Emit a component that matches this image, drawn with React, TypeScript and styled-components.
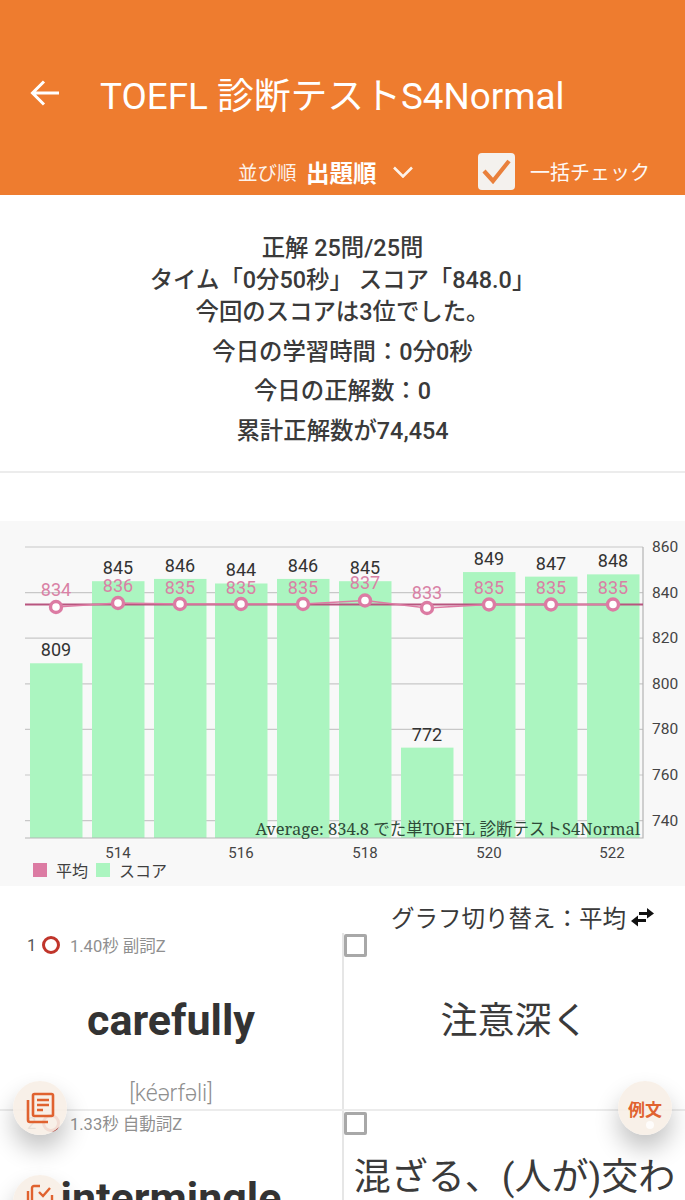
// 3rd party libs
import React from 'react';
import styled, { createGlobalStyle } from 'styled-components';

const JP = `Roboto, "Noto Sans CJK JP", sans-serif`;

const GlobalStyle = createGlobalStyle`
  html, body {
    margin: 0;
    padding: 0;
    background: #fff;
  }
  body {
    font-family: ${JP};
    color: #3a3a3a;
  }
`;

// Chart data
const scores = [809, 845, 846, 844, 846, 845, 772, 849, 847, 848];
const averages = [834, 836, 835, 835, 835, 837, 833, 835, 835, 835];
const averageY = [607, 603, 604, 604, 604, 600.5, 608, 604.5, 604.5, 604.5];
const barLefts = [30, 92, 154, 215, 277, 339, 401, 463, 525, 587];
const gridValues = [860, 840, 820, 800, 780, 760, 740];
const xLabels = [
  { x: 118, label: '514' },
  { x: 241, label: '516' },
  { x: 365, label: '518' },
  { x: 489, label: '520' },
  { x: 612, label: '522' }
];
const toY = (value: number) => 547 + (860 - value) * 2.28;

// Styling
const Page = styled.div`
  position: relative;
  width: 685px;
  height: 1200px;
  overflow: hidden;
  background: #fff;
`;

const Header = styled.header`
  height: 195px;
  background: #ee7c2f;
  color: #fff;
  display: flex;
  flex-direction: column;
  box-sizing: border-box;
  padding-top: 69px;
`;

const TitleRow = styled.div`
  display: flex;
  align-items: center;
  height: 48px;
  padding-left: 30px;
  gap: 40px;
`;

const Title = styled.h1`
  margin: 0;
  font-size: 36.8px;
  font-weight: 400;
  white-space: nowrap;
`;

const SortRow = styled.div`
  display: flex;
  align-items: center;
  margin-top: 36px;
  padding-left: 238px;
  height: 37px;
`;

const SortLabel = styled.span`
  font-size: 19.5px;
  width: 68px;
  opacity: 0.9;
`;

const SortValue = styled.span`
  font-size: 23.5px;
  font-weight: 700;
  width: 87px;
`;

const CheckAll = styled.span`
  width: 37px;
  height: 37px;
  border-radius: 4px;
  background: #f4f1ee;
  margin-left: 65px;
  display: flex;
  align-items: center;
  justify-content: center;
`;

const CheckLabel = styled.span`
  font-size: 20px;
  margin-left: 15px;
  white-space: nowrap;
  opacity: 0.95;
`;

const Summary = styled.section`
  height: 278px;
  box-sizing: border-box;
  border-bottom: 2px solid #ececec;
  padding-top: 37px;
  display: flex;
  flex-direction: column;
  align-items: center;
  font-size: 23.4px;
  font-weight: 500;
  color: #3a3a3a;
`;

const SummaryLine = styled.div<{ $gap?: number }>`
  height: 32px;
  line-height: 32px;
  white-space: pre;
  margin-top: ${({ $gap }) => $gap ?? 0}px;
`;

const ChartPanel = styled.section`
  margin-top: 48px;
  height: 365px;
  background: #f8f8f8;
`;

const ChartSvg = styled.svg`
  display: block;
  width: 685px;
  height: 340px;
  text {
    font-family: ${JP};
  }
`;

const Legend = styled.div`
  display: flex;
  align-items: center;
  height: 18px;
  padding-left: 33px;
  font-size: 16px;
  color: #3f3f3f;
`;

const LegendSwatch = styled.span<{ $color: string }>`
  width: 14px;
  height: 14px;
  background: ${({ $color }) => $color};
  margin-right: 9px;
`;

const LegendText = styled.span`
  margin-right: 8px;
`;

const Toggle = styled.div`
  height: 47px;
  box-sizing: border-box;
  padding: 16px 29px 1px 0;
  display: flex;
  align-items: center;
  justify-content: flex-end;
  font-size: 23.5px;
  color: #3a3a3a;
  white-space: nowrap;
`;

const WordRow = styled.div`
  display: grid;
  grid-template-columns: 344px 341px;
  height: 178px;
  border-bottom: 2px solid #ececec;
  box-sizing: border-box;
`;

const WordCell = styled.div`
  border-right: 2px solid #e6e6e6;
  padding-left: 27px;
  display: flex;
  flex-direction: column;
  align-items: center;
  overflow: hidden;
`;

const Meta = styled.div`
  align-self: flex-start;
  display: flex;
  align-items: center;
  height: 24px;
  font-size: 16.5px;
  color: #8f8f8f;
  white-space: nowrap;
`;

const MetaIndex = styled.span`
  color: #555;
  width: 15px;
`;

const CorrectMark = styled.span`
  width: 18px;
  height: 18px;
  box-sizing: border-box;
  border: 3.5px solid #c0352b;
  border-radius: 50%;
  margin-right: 10px;
`;

const Word = styled.div`
  position: relative;
  z-index: 1;
  font-family: Roboto, sans-serif;
  font-size: 43px;
  font-weight: 700;
  line-height: 54px;
  color: #333;
  margin-top: 36px;
  margin-left: -27px;
`;

const Pronunciation = styled.div`
  font-size: 23px;
  color: #8f8f8f;
  margin-top: 33px;
  margin-left: -27px;
  font-weight: 300;
`;

const MeaningCell = styled.div`
  padding-top: 1px;
  overflow: hidden;
`;

const CheckBox = styled.span`
  display: block;
  width: 23px;
  height: 23px;
  box-sizing: border-box;
  border: 3px solid #a8a8a8;
  border-radius: 2px;
`;

const Meaning = styled.div<{ $top: number }>`
  font-size: 37px;
  line-height: 46px;
  color: #3a3a3a;
  text-align: center;
  padding: 0 8px;
  margin-top: ${({ $top }) => $top}px;
`;

const Fab = styled.div<{ $side: 'left' | 'right'; $top: number }>`
  position: absolute;
  top: ${({ $top }) => $top}px;
  ${({ $side }) => ($side === 'left' ? 'left: 13px;' : 'right: 13px;')}
  width: 54px;
  height: 54px;
  border-radius: 50%;
  background: rgba(247, 238, 230, 0.9);
  box-shadow: 0 14px 24px rgba(0, 0, 0, 0.24);
  display: flex;
  align-items: center;
  justify-content: center;
  color: #e0622f;
  font-size: 17px;
  font-weight: 700;
`;

const FabDot = styled.span`
  position: absolute;
  left: 28px;
  top: 40px;
  width: 8px;
  height: 8px;
  border-radius: 50%;
  background: #fff;
  opacity: 0.8;
`;

const BackIcon = () => (
  <svg width="30" height="30" viewBox="0 0 30 30" fill="none" stroke="#fff" strokeWidth="3">
    <path d="M29 15H3M14 3.5 2.5 15 14 26.5" />
  </svg>
);

const ChevronIcon = () => (
  <svg width="20" height="12" viewBox="0 0 20 12" fill="none" stroke="#fff" strokeWidth="2.6" opacity="0.9">
    <path d="M1 1.5 10 10.5 19 1.5" />
  </svg>
);

const TickIcon = () => (
  <svg width="29" height="25" viewBox="0 0 29 25" fill="none" stroke="#e9803c" strokeWidth="4.2">
    <path d="M2 12 11 22 27 2" />
  </svg>
);

const SwapIcon = () => (
  <svg width="27" height="20" viewBox="0 0 27 20" fill="#111" style={{ marginLeft: 3 }}>
    <path d="M10 5h8V1l7 5.5-7 5V8h-8z" />
    <path d="M17 12H9V8.5L2 14l7 5.5V15h8z" />
  </svg>
);

const NotesIcon = () => (
  <svg width="30" height="32" viewBox="0 0 30 32" fill="none" stroke="#e0622f" strokeWidth="2.6">
    <rect x="8" y="2" width="20" height="22" rx="1.5" />
    <path d="M12 8h12M12 13h12M12 18h6" />
    <path d="M3 8v20a2 2 0 0 0 2 2h18" />
  </svg>
);

const CalendarIcon = () => (
  <svg width="30" height="32" viewBox="0 0 30 32" fill="none" stroke="#e0622f" strokeWidth="2.4" style={{ marginTop: -6 }}>
    <path d="M7 22V5a2 2 0 0 1 2-2h6" />
    <path d="M3 8v20h18" />
    <path d="M14 9l4 4 7-8" />
    <path d="M27 12v12H9" />
  </svg>
);

const ScoreChart = () => {
  const points = averageY.map((y, index) => ({ x: barLefts[index] + 26, y }));
  return (
    <ChartSvg viewBox="0 521 685 340">
      {gridValues.map((value) => (
        <g key={value}>
          <line x1="25" x2="643" y1={toY(value)} y2={toY(value)} stroke="#c8c8c8" strokeWidth="1.2" />
          <text x="652" y={toY(value) + 5} fontSize="15.5" fill="#444">
            {value}
          </text>
        </g>
      ))}
      {scores.map((value, index) => (
        <rect
          key={barLefts[index]}
          x={barLefts[index]}
          y={toY(value)}
          width="52.5"
          height={838 - toY(value)}
          fill="#abf5c0"
        />
      ))}
      <path d="M25 838H643V547" fill="none" stroke="#b5b5b5" strokeWidth="1.2" />
      <line x1="25" x2="643" y1="604.5" y2="604.5" stroke="#b8557f" strokeWidth="1.8" />
      <polyline
        points={points.map(({ x, y }) => `${x},${y}`).join(' ')}
        fill="none"
        stroke="#dd7ba3"
        strokeWidth="1.5"
      />
      {points.map(({ x, y }) => (
        <circle key={x} cx={x} cy={y} r="5.5" fill="#fff" stroke="#dc7ba3" strokeWidth="3.4" />
      ))}
      {scores.map((value, index) => (
        <text
          key={barLefts[index]}
          x={barLefts[index] + 26}
          y={toY(value) - 7}
          fontSize="18"
          fill="#333"
          textAnchor="middle"
        >
          {value}
        </text>
      ))}
      {averages.map((value, index) => (
        <text
          key={barLefts[index]}
          x={barLefts[index] + 26}
          y={toY(value) - 10}
          fontSize="18"
          fill="#d981a5"
          textAnchor="middle"
        >
          {value}
        </text>
      ))}
      <text
        x="640"
        y="835"
        fontSize="16.5"
        fill="#2f4a38"
        textAnchor="end"
        style={{ fontFamily: `"Noto Serif", "DejaVu Serif", "Noto Sans CJK JP", serif` }}
      >
        Average: 834.8 でた単TOEFL 診断テストS4Normal
      </text>
      {xLabels.map(({ x, label }) => (
        <text key={label} x={x} y="858" fontSize="15" fill="#444" textAnchor="middle">
          {label}
        </text>
      ))}
    </ChartSvg>
  );
};

const App = (): JSX.Element => {
  return (
    <Page>
      <GlobalStyle />
      <Header>
        <TitleRow>
          <BackIcon />
          <Title>TOEFL 診断テストS4Normal</Title>
        </TitleRow>
        <SortRow>
          <SortLabel>並び順</SortLabel>
          <SortValue>出題順</SortValue>
          <ChevronIcon />
          <CheckAll>
            <TickIcon />
          </CheckAll>
          <CheckLabel>一括チェック</CheckLabel>
        </SortRow>
      </Header>
      <Summary>
        <SummaryLine>正解 25問/25問</SummaryLine>
        <SummaryLine>タイム「0分50秒」 スコア「848.0」</SummaryLine>
        <SummaryLine>今回のスコアは3位でした。</SummaryLine>
        <SummaryLine $gap={8}>今日の学習時間：0分0秒</SummaryLine>
        <SummaryLine $gap={7}>今日の正解数：0</SummaryLine>
        <SummaryLine $gap={8}>累計正解数が74,454</SummaryLine>
      </Summary>
      <ChartPanel>
        <ScoreChart />
        <Legend>
          <LegendSwatch $color="#dc7ba3" />
          <LegendText>平均</LegendText>
          <LegendSwatch $color="#abf5c0" />
          <LegendText>スコア</LegendText>
        </Legend>
      </ChartPanel>
      <Toggle>
        グラフ切り替え：平均
        <SwapIcon />
      </Toggle>
      <WordRow>
        <WordCell>
          <Meta>
            <MetaIndex>1</MetaIndex>
            <CorrectMark />
            1.40秒 副詞Z
          </Meta>
          <Word>carefully</Word>
          <Pronunciation>[kéərfəli]</Pronunciation>
        </WordCell>
        <MeaningCell>
          <CheckBox />
          <Meaning $top={42}>注意深く</Meaning>
        </MeaningCell>
      </WordRow>
      <WordRow>
        <WordCell>
          <Meta>
            <MetaIndex>2</MetaIndex>
            <CorrectMark />
            1.33秒 自動詞Z
          </Meta>
          <Word>intermingle</Word>
        </WordCell>
        <MeaningCell>
          <CheckBox />
          <Meaning $top={20}>混ざる、(人が)交わる</Meaning>
        </MeaningCell>
      </WordRow>
      <Fab $side="left" $top={1081}>
        <NotesIcon />
      </Fab>
      <Fab $side="left" $top={1175}>
        <CalendarIcon />
      </Fab>
      <Fab $side="right" $top={1081}>
        例文
        <FabDot />
      </Fab>
    </Page>
  );
};

export default App;
